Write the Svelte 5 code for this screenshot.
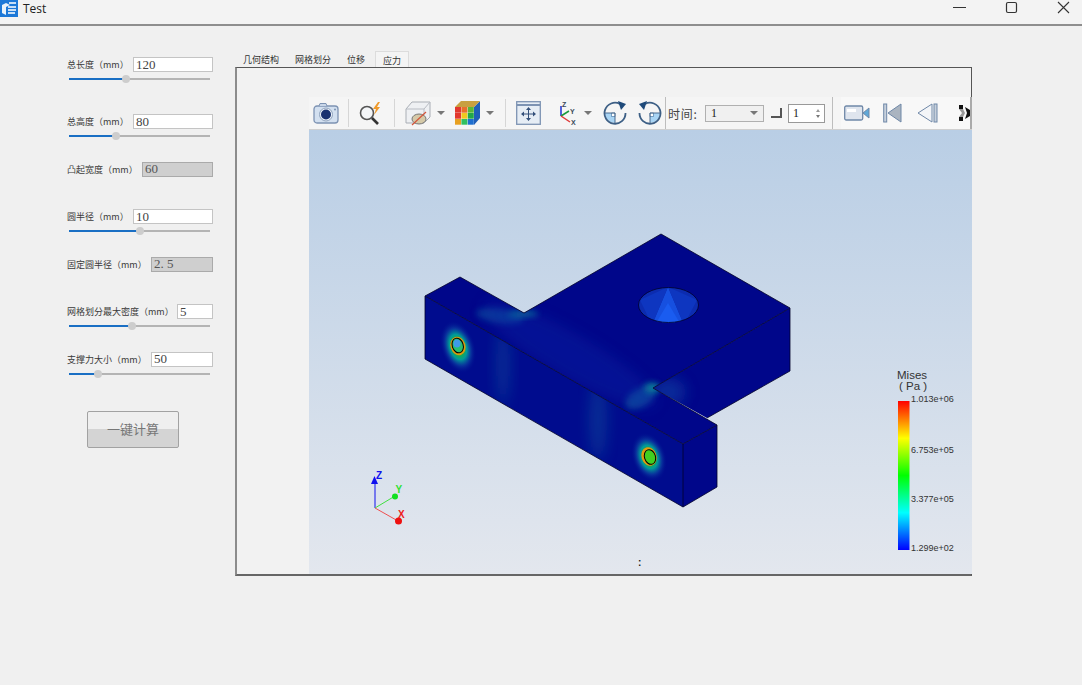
<script>
  const fields = [
    { label: '总长度（mm）', value: '120', slider: 40.5, inputWidth: 80 },
    { label: '总高度（mm）', value: '80', slider: 33, inputWidth: 80 },
    { label: '凸起宽度（mm）', value: '60', inputWidth: 71, disabled: true },
    { label: '圆半径（mm）', value: '10', slider: 50, inputWidth: 80 },
    { label: '固定圆半径（mm）', value: '2. 5', inputWidth: 62, disabled: true },
    { label: '网格划分最大密度（mm）', value: '5', slider: 44.5, inputWidth: 36 },
    { label: '支撑力大小（mm）', value: '50', slider: 20.5, inputWidth: 62 }
  ];

  const tabs = ['几何结构', '网格划分', '位移', '应力'];

  // colours of the front face of the cube icon, row by row
  const cube = [
    ['#e2382e', '#e8702a', '#58b838'],
    ['#e2382e', '#f0c81e', '#22a84a'],
    ['#e8a020', '#30c060', '#1f6fd0']
  ];
</script>

<div class="window">
  <header class="titlebar">
    <svg class="app-icon" width="18" height="17" viewBox="0 0 18 17">
      <rect width="18" height="17" fill="#1c78d8" />
      <path d="M2 5l4-2 4 2-4 2zM2 5v8l4 2V7z" fill="#fff" opacity=".9" />
      <path d="M8 7h8M8 10h8M8 13h7M9 3h7" stroke="#fff" stroke-width="1.6" fill="none" />
    </svg>
    <span class="title">Test</span>
    <div class="controls">
      <svg width="13" height="13" viewBox="0 0 13 13"><path d="M0 6.5h13" stroke="#333" /></svg>
      <svg width="13" height="13" viewBox="0 0 13 13"><rect x="1.5" y="1.5" width="10" height="10" rx="1.5" fill="none" stroke="#333" stroke-width="1.2" /></svg>
      <svg width="13" height="13" viewBox="0 0 13 13"><path d="M1 1l11 11M12 1L1 12" stroke="#333" stroke-width="1.1" /></svg>
    </div>
  </header>

  <main class="content">
    <aside class="params">
      {#each fields as f}
        <div class="field">
          <div class="row">
            <span class="label">{f.label}</span>
            <input
              class="num"
              class:disabled={f.disabled}
              style="width: {f.inputWidth}px"
              value={f.value}
              readonly
            />
          </div>
          {#if f.slider}
            <div class="slider">
              <div class="fill" style="width: {f.slider}%"></div>
              <div class="knob" style="left: {f.slider}%"></div>
            </div>
          {/if}
        </div>
      {/each}
      <button class="calc">一键计算</button>
    </aside>

    <section class="tabs-wrap">
      <nav class="tabs">
        {#each tabs as t, i}
          <span class="tab" class:active={i === 3}>{t}</span>
        {/each}
      </nav>
      <div class="pane">
        <div class="viewer">
          <div class="toolbar">
            <div class="tools">
              <svg class="ic" style="margin-left: 4px" width="26" height="22" viewBox="0 0 26 22">
                <rect x="1" y="4" width="24" height="17" rx="3" fill="#d3e0f0" stroke="#7d93b3" stroke-width="1.3" />
                <path d="M6 4l1-2.5h6L14 4" fill="#c9d6e8" stroke="#7d93b3" />
                <circle cx="13" cy="12.5" r="6.5" fill="#eef3f9" stroke="#8ea2bd" />
                <circle cx="13" cy="12.5" r="5" fill="#1a3270" />
                <circle cx="22" cy="7.5" r="1" fill="#7d93b3" />
              </svg>
              <i class="sep" style="margin: 0 9px"></i>
              <svg width="25" height="24" viewBox="0 0 25 24">
                <circle cx="9" cy="12" r="6.5" fill="#f4f6f8" stroke="#555" stroke-width="1.6" />
                <path d="M14 17l6 6" stroke="#333" stroke-width="2.6" />
                <path d="M20 1l-5 7h3l-2 6 6-8h-3l3-5z" fill="#ef9a2b" />
              </svg>
              <i class="sep" style="margin: 0 10px 0 11px"></i>
              <svg width="26" height="25" viewBox="0 0 26 25">
                <path d="M1 8l6-7h18v15l-6 6H1z" fill="#eef0f3" stroke="#a9aeb5" />
                <path d="M1 8h18v14M19 8l6-7" fill="none" stroke="#b8bcc3" />
                <ellipse cx="14" cy="18" rx="7" ry="5" fill="#d5c9a8" stroke="#777" />
                <path d="M7 24L21 11" stroke="#d4553a" stroke-width="1.2" />
              </svg>
              <i class="arrow" style="margin: 0 9px 0 6px"></i>
              <svg width="26" height="26" viewBox="0 0 26 26">
                <path d="M20 7l6-6v17l-6 7z" fill="#1f5fb8" />
                <path d="M7 1h19l-6 6H1z" fill="#c8a040" />
                {#each cube as row, r}
                  {#each row as c, k}
                    <rect x={1 + k * 6.4} y={7 + r * 6} width="6" height="5.700" fill={c} />
                  {/each}
                {/each}
              </svg>
              <i class="arrow" style="margin: 0 11px 0 6px"></i>
              <i class="sep" style="margin-right: 10px"></i>
              <svg width="25" height="24" viewBox="0 0 25 24">
                <rect x=".7" y=".7" width="23.600" height="22.600" fill="#e6edf5" stroke="#7d93b3" stroke-width="1.300" />
                <path d="M1 4h23" stroke="#7d93b3" stroke-width="2" />
                <path d="M12.500 7v12M6 13h13" stroke="#34507a" />
                <path d="M12.500 6l-2.500 3h5zM12.500 20l-2.500-3h5zM5 13l3-2.500v5zM20 13l-3-2.500v5z" fill="#34507a" />
              </svg>
              <svg style="margin-left: 14px" width="24" height="25" viewBox="0 0 24 25">
                <path d="M6 15V5" stroke="#1b2fd0" stroke-width="1.500" />
                <path d="M6 15l8-5" stroke="#1a9a3c" stroke-width="1.500" />
                <path d="M6 15l9 6" stroke="#e03a3a" stroke-width="1.500" />
                <text x="7" y="6" class="axis-t">Z</text>
                <text x="15" y="13" class="axis-t">Y</text>
                <text x="16" y="24" class="axis-t">X</text>
              </svg>
              <i class="arrow" style="margin: 0 11px 0 5px"></i>
              <svg width="24" height="24" viewBox="0 0 24 24">
                <path d="M2 12h10v10A10 10 0 0 1 2 12z" fill="#a8d4f4" />
                <path d="M12 12H8.500v3.500H12z" fill="#fff" stroke="#3a6a98" stroke-width=".6" />
                <path d="M17 3A10.500 10.500 0 1 0 22.500 12" fill="none" stroke="#3d5f85" stroke-width="1.800" />
                <path d="M1.500 12H12v10.500" fill="none" stroke="#3d5f85" stroke-width=".9" />
                <path d="M15 0l8 3-5 6z" fill="#1f4a7a" />
              </svg>
              <svg style="margin-left: 11px" width="24" height="24" viewBox="0 0 24 24">
                <path d="M12 12h10a10 10 0 0 1-10 10z" fill="#a8d4f4" />
                <path d="M12 12h3.500v3.500H12z" fill="#fff" stroke="#3a6a98" stroke-width=".6" />
                <path d="M7 3A10.500 10.500 0 1 1 1.500 12" fill="none" stroke="#3d5f85" stroke-width="1.800" />
                <path d="M22.500 12H12v10.500" fill="none" stroke="#3d5f85" stroke-width=".9" />
                <path d="M9 0L1 3l5 6z" fill="#1f4a7a" />
              </svg>
              <i class="sep strong" style="margin-left: 3px"></i>
              <span class="time">时间:</span>
              <div class="select"><span>1</span><i class="arrow"></i></div>
              <i class="corner"></i>
              <div class="spin">
                <span>1</span>
                <div class="spin-btns"><i></i><i></i></div>
              </div>
              <i class="sep strong" style="margin-left: 7px"></i>
            </div>
            <div class="tools play">
              <svg width="26" height="16" viewBox="0 0 26 16">
                <rect x=".7" y="1" width="18" height="14" rx="1.500" fill="#dfe5ee" stroke="#6f88a8" stroke-width="1.300" />
                <rect x="3" y="4" width="9" height="3" fill="#fff" />
                <path d="M19 8l6-5v10z" fill="#5fa8d8" stroke="#6f88a8" />
              </svg>
              <svg style="margin-left: 13px" width="19" height="20" viewBox="0 0 19 20">
                <rect x=".7" y="1" width="3" height="18" fill="#c7d0db" stroke="#6f88a8" />
                <path d="M18 1v18L5 10z" fill="#aab4c0" stroke="#6f88a8" />
              </svg>
              <svg style="margin-left: 15px" width="21" height="20" viewBox="0 0 21 20">
                <path d="M15 1v18L1 10z" fill="#f3f5f8" stroke="#6f88a8" />
                <rect x="17" y="1" width="3" height="18" fill="#c7d0db" stroke="#6f88a8" />
              </svg>
              <svg style="margin-left: 21px" width="11" height="16" viewBox="0 0 11 16">
                <path d="M0 0h4v4H0zM0 12h4v4H0zM6 2l5 3v6l-5 3 2-6z" fill="#111" />
                <path d="M0 4h4l2 4-2 4H0l3-4z" fill="#999" />
              </svg>
            </div>
          </div>

          <svg class="scene" viewBox="309 130 663 444" width="663" height="444">
            <defs>
              <linearGradient id="bg" x1="0" y1="0" x2="0" y2="1">
                <stop offset="0" stop-color="#b9cee5" />
                <stop offset="1" stop-color="#e3e7ee" />
              </linearGradient>
              <linearGradient id="legend" x1="0" y1="0" x2="0" y2="1">
                <stop offset="0" stop-color="#ff0000" />
                <stop offset=".25" stop-color="#ffff00" />
                <stop offset=".5" stop-color="#00ff00" />
                <stop offset=".75" stop-color="#00ffff" />
                <stop offset="1" stop-color="#0000ff" />
              </linearGradient>
              <radialGradient id="hot">
                <stop offset="0" stop-color="#c89000" />
                <stop offset=".28" stop-color="#18b040" />
                <stop offset=".48" stop-color="#009a98" />
                <stop offset=".72" stop-color="#0a3aa0" stop-opacity=".8" />
                <stop offset="1" stop-color="#00108f" stop-opacity="0" />
              </radialGradient>
              <filter id="soft" x="-60%" y="-60%" width="220%" height="220%">
                <feGaussianBlur stdDeviation="7" />
              </filter>
              <filter id="softer" x="-60%" y="-60%" width="220%" height="220%">
                <feGaussianBlur stdDeviation="3" />
              </filter>
              <clipPath id="top-clip">
                <path d="M661 234L790 308L653 388L717 425L683 444L425 296L460 277L524 313Z" />
              </clipPath>
              <clipPath id="front-clip">
                <path d="M425 296L683 444V507L425 359Z" />
              </clipPath>
              <clipPath id="side-clip">
                <path d="M790 308V371L707 418L653 388Z" />
              </clipPath>
              <clipPath id="hole-clip">
                <ellipse cx="668.500" cy="305" rx="30" ry="17.500" />
              </clipPath>
            </defs>

            <rect x="309" y="130" width="663" height="444" fill="url(#bg)" />

            <!-- stress model -->
            <path d="M661 234L790 308L653 388L717 425L683 444L425 296L460 277L524 313Z" fill="#00068a" />
            <path d="M425 296L683 444V507L425 359Z" fill="#000c8e" />
            <path d="M683 444L717 425V487L683 507Z" fill="#00068a" />
            <path d="M790 308V371L707 418L653 388Z" fill="#00068a" />

            <g clip-path="url(#top-clip)">
              <ellipse cx="500" cy="316" rx="24" ry="7" fill="#0a5aa0" opacity=".6" filter="url(#softer)" transform="rotate(8 500 316)" />
              <ellipse cx="523" cy="314" rx="15" ry="3" fill="#0a9a9a" opacity=".8" filter="url(#softer)" />
              <ellipse cx="640" cy="398" rx="16" ry="9" fill="#0a5aa0" opacity=".75" filter="url(#softer)" transform="rotate(-30 640 398)" />
              <ellipse cx="652" cy="388" rx="8" ry="5" fill="#0a9a9a" opacity=".9" filter="url(#softer)" />
              <ellipse cx="570" cy="355" rx="100" ry="22" fill="#0a2aa8" opacity=".35" filter="url(#soft)" transform="rotate(30 570 355)" />
            </g>
            <g clip-path="url(#side-clip)">
              <ellipse cx="668" cy="392" rx="18" ry="14" fill="#0a3aa0" opacity=".7" filter="url(#soft)" />
            </g>
            <g clip-path="url(#front-clip)">
              <ellipse cx="503" cy="365" rx="7" ry="40" fill="#0a4f9e" opacity=".5" filter="url(#soft)" />
              <ellipse cx="598" cy="420" rx="9" ry="40" fill="#0a4f9e" opacity=".5" filter="url(#soft)" />
              <ellipse cx="458" cy="347" rx="17" ry="27" fill="url(#hot)" transform="rotate(-18 458 347)" />
              <ellipse cx="649" cy="457" rx="17" ry="25" fill="url(#hot)" transform="rotate(-18 649 457)" />
            </g>

            <path d="M661 234L790 308L653 388L717 425L683 444L425 296L460 277L524 313Z" fill="none" stroke="#000028" stroke-width=".8" />
            <path d="M425 296V359L683 507L717 487V425M683 444V507M790 308V371L707 418" fill="none" stroke="#000028" stroke-width=".8" />

            <ellipse cx="668.500" cy="305" rx="30" ry="17.500" fill="#0c2cb0" />
            <g clip-path="url(#hole-clip)">
              <path d="M668 287L652 325H684Z" fill="#1650e0" />
              <path d="M668 287L640 300L652 325ZM668 287L697 300L684 325Z" fill="#0e36c0" />
              <path d="M668 303L655 325H681Z" fill="#1a5cf0" />
            </g>
            <ellipse cx="668.500" cy="305" rx="30" ry="17.500" fill="none" stroke="#000028" stroke-width=".8" />

            <ellipse cx="458" cy="346" rx="7.500" ry="9.500" fill="#d89a10" transform="rotate(-18 458 346)" />
            <ellipse cx="457.700" cy="345.500" rx="5.500" ry="7.500" fill="#25c070" stroke="#000" transform="rotate(-18 457.700 345.500)" />
            <ellipse cx="457" cy="343.500" rx="3.500" ry="4" fill="#3e9ae8" />
            <ellipse cx="649" cy="456.500" rx="7.500" ry="9.500" fill="#e09a10" transform="rotate(-18 649 456.500)" />
            <ellipse cx="650" cy="457" rx="5.500" ry="7.500" fill="#40d020" stroke="#000" transform="rotate(-18 650 457)" />

            <!-- orientation triad -->
            <path d="M375 508V480" stroke="#1010ee" stroke-width="1" />
            <path d="M375 508L395 496" stroke="#40e040" stroke-width="1" />
            <path d="M375 508L398 521" stroke="#ee5050" stroke-width="1" />
            <path d="M374.500 476L371 484H378Z" fill="#1010ee" />
            <circle cx="395" cy="496.500" r="3" fill="#10e020" />
            <circle cx="398.500" cy="521" r="3.500" fill="#ee1010" />
            <text x="376" y="479" class="triad" fill="#1010ee">Z</text>
            <text x="395.500" y="493" class="triad" fill="#30e030">Y</text>
            <text x="398" y="518" class="triad" fill="#ee2020">X</text>

            <!-- colour legend -->
            <rect x="898" y="401" width="11.500" height="149" fill="url(#legend)" />
            <text x="897" y="378.500" class="legend-title">Mises</text>
            <text x="899" y="389.500" class="legend-title">( Pa )</text>
            <text x="911" y="401.500" class="legend-tick">1.013e+06</text>
            <text x="911" y="452.500" class="legend-tick">6.753e+05</text>
            <text x="911" y="501.500" class="legend-tick">3.377e+05</text>
            <text x="911" y="550.500" class="legend-tick">1.299e+02</text>
            <text x="638" y="566" class="dots">:</text>
          </svg>
        </div>
      </div>
    </section>
  </main>
</div>

<style>
  :global(body) {
    margin: 0;
    background: #f0f0f0;
  }

  .window {
    width: 1082px;
    height: 685px;
    overflow: hidden;
    font-family: "Noto Sans CJK SC", "Noto Sans", sans-serif;
    color: #333;
  }

  .titlebar {
    height: 24px;
    display: flex;
    align-items: flex-start;
    background: #f3f3f3;
    border-bottom: 2px solid #8e8e8e;
  }

  .app-icon {
    flex: none;
  }

  .title {
    margin-left: 5px;
    font: 12px/17px "Open Sans", "Liberation Sans", sans-serif;
    color: #222;
  }

  .controls {
    margin-left: auto;
    margin-right: 12px;
    display: flex;
    gap: 39px;
    padding-top: 1px;
  }

  .content {
    display: flex;
  }

  .params {
    width: 146px;
    margin-left: 67px;
    padding-top: 31px;
    flex: none;
  }

  .field {
    height: 47.5px;
  }

  .field:first-child {
    height: 57px;
  }

  .row {
    display: flex;
    align-items: center;
    justify-content: space-between;
    height: 15px;
  }

  .label {
    font-size: 9px;
    white-space: nowrap;
    color: #3a3a3a;
  }

  .num {
    box-sizing: border-box;
    height: 15px;
    padding: 0 2px;
    border: 1px solid #c4c4c4;
    border-radius: 0;
    background: #fff;
    font: 13px "Liberation Serif", serif;
    color: #444;
    outline: none;
  }

  .num.disabled {
    background: #cfcfcf;
    border-color: #aaa;
    color: #555;
  }

  .slider {
    position: relative;
    height: 2px;
    width: 141px;
    margin: 6px 0 0 2px;
    background: #b4b4b4;
  }

  .fill {
    height: 2px;
    background: #1a6fc4;
  }

  .knob {
    position: absolute;
    top: -3px;
    width: 8px;
    height: 8px;
    margin-left: -4px;
    border-radius: 50%;
    background: #cdcdcd;
  }

  .calc {
    display: block;
    width: 92px;
    height: 37px;
    margin: 12px 0 0 20px;
    padding: 0 0 3px;
    border: 1px solid #a2a2a2;
    border-radius: 2px;
    background: linear-gradient(#efefef 50%, #d4d4d4 50%);
    font: 13px "Noto Sans CJK SC", sans-serif;
    color: #777;
  }

  .tabs-wrap {
    width: 737px;
    margin-left: 22px;
    padding-top: 25px;
  }

  .tabs {
    display: flex;
    height: 16px;
    align-items: flex-end;
  }

  .tab {
    box-sizing: border-box;
    height: 16px;
    padding: 0 8px;
    font-size: 9px;
    line-height: 17px;
    color: #333;
  }

  .tab.active {
    margin-left: 2px;
    padding: 0 7px;
    border: 1px solid #dcdcdc;
    border-bottom: 0;
    background: #f4f4f4;
  }

  .pane {
    box-sizing: border-box;
    height: 509px;
    padding: 29px 0 0 72px;
    border: 1px solid #555;
    border-left: 2px solid #8c8c8c;
    border-bottom: 2px solid #666;
    background: #f2f2f2;
  }

  .viewer {
    width: 663px;
    overflow: hidden;
  }

  .toolbar {
    display: flex;
    height: 33px;
    background: #f5f5f5;
    border-bottom: 1px solid #d0d0d0;
    box-sizing: border-box;
    align-items: center;
  }

  .tools {
    display: flex;
    align-items: center;
    height: 100%;
    flex: none;
  }

  .play {
    padding-left: 3px;
    margin-left: 8px;
    background: #f8f8f8;
    border-right: 2px solid #aaa;
    flex: 1;
  }

  .sep {
    display: block;
    width: 1px;
    height: 28px;
    background: #d6d6d6;
    flex: none;
  }

  .sep.strong {
    height: 100%;
    background: #bdbdbd;
  }

  .arrow {
    display: block;
    flex: none;
    width: 0;
    height: 0;
    border: 4px solid transparent;
    border-top: 4px solid #777;
    border-bottom: 0;
  }

  .ic {
    flex: none;
  }

  .axis-t {
    font: bold 7px "Liberation Sans", sans-serif;
    fill: #3a4a5a;
  }

  .time {
    width: 39px;
    padding-left: 2px;
    box-sizing: border-box;
    font: 12px "Noto Sans CJK SC", sans-serif;
    letter-spacing: .8px;
    color: #444;
    white-space: nowrap;
  }

  .select {
    box-sizing: border-box;
    display: flex;
    align-items: center;
    justify-content: space-between;
    width: 59px;
    height: 17px;
    padding: 0 5px;
    border: 1px solid #b0b0b0;
    background: #f0f0f0;
    font: 12px "Liberation Serif", serif;
    color: #222;
  }

  .corner {
    display: block;
    width: 11px;
    height: 10px;
    margin: 0 6px 0 7px;
    border-right: 2px solid #555;
    border-bottom: 2px solid #555;
    box-sizing: border-box;
  }

  .spin {
    box-sizing: border-box;
    display: flex;
    align-items: center;
    justify-content: space-between;
    width: 37px;
    height: 19px;
    padding: 0 4px;
    border: 1px solid #999;
    background: #fff;
    font: 12px "Liberation Serif", serif;
    color: #222;
  }

  .spin-btns {
    display: flex;
    flex-direction: column;
    gap: 3px;
  }

  .spin-btns i {
    display: block;
    width: 0;
    height: 0;
    border: 2.500px solid transparent;
    border-top: 0;
    border-bottom: 3px solid #999;
  }

  .spin-btns i:last-child {
    border-bottom: 0;
    border-top: 3px solid #777;
  }

  .scene {
    display: block;
  }

  .triad {
    font: bold 10px "Liberation Sans", sans-serif;
  }

  .legend-title {
    font: 11.5px "Liberation Sans", sans-serif;
    fill: #333;
  }

  .legend-tick {
    font: 9px "Liberation Sans", sans-serif;
    fill: #333;
  }

  .dots {
    font: bold 10px "Liberation Sans", sans-serif;
    fill: #222;
  }
</style>
